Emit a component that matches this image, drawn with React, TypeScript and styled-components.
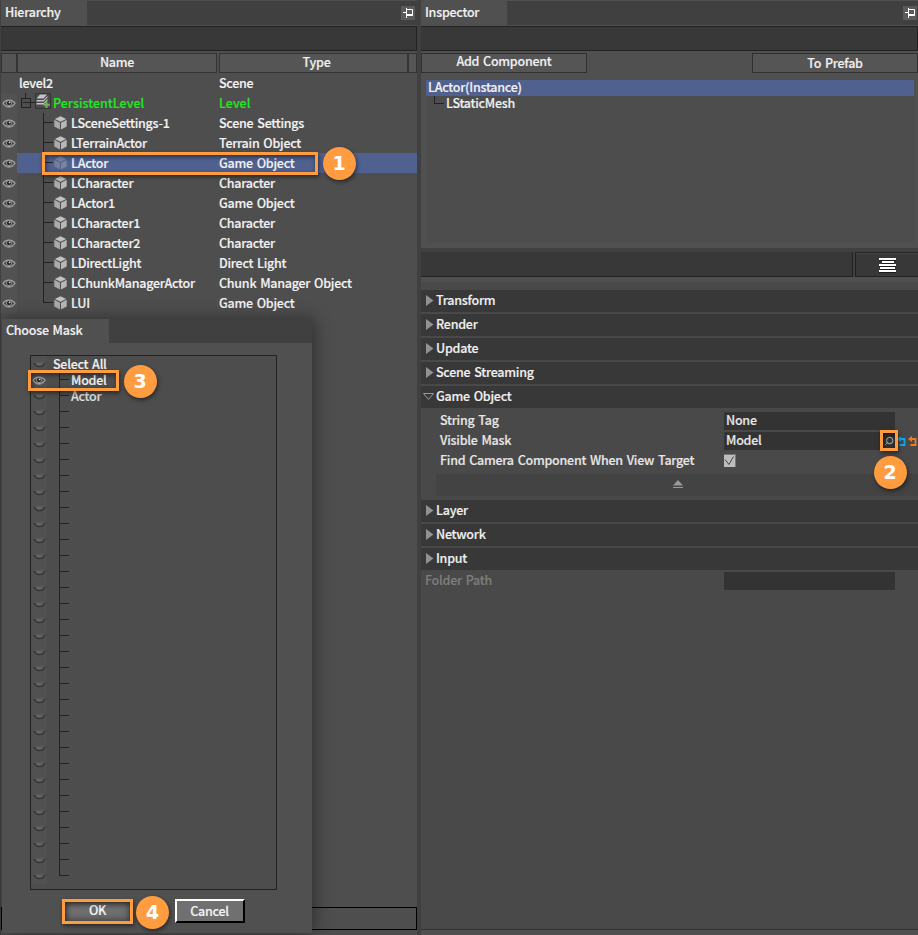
import React from 'react';
import styled, { createGlobalStyle, css } from 'styled-components';

const GlobalStyle = createGlobalStyle`
  * { box-sizing: border-box; }
  html, body { margin: 0; padding: 0; background: #4f4f4f; }
  body {
    font-family: "Noto Sans CJK SC", "Noto Sans", sans-serif;
    font-size: 12.5px;
    font-weight: 500;
    letter-spacing: -0.25px;
    word-spacing: 1.3px;
    -webkit-text-stroke: 0.15px currentColor;
    color: #f0f0f0;
    overflow: hidden;
  }
  button { letter-spacing: inherit; word-spacing: inherit; }
`;

const ORANGE = '#ff9c40';
const LINE = '#222222';

const Screen = styled.main`
  position: relative;
  display: flex;
  width: 918px;
  height: 935px;
  background: #4f4f4f;
  overflow: hidden;
  white-space: nowrap;
`;

const HierarchyPanel = styled.section`
  display: flex;
  flex-direction: column;
  width: 417px;
  padding-top: 1px;
  border-left: 1px solid #404040;
  background: #4e4e4e;
`;

const Splitter = styled.div`
  width: 4px;
  background: #404040;
`;

const InspectorPanel = styled.section`
  display: flex;
  flex-direction: column;
  width: 497px;
  padding-top: 1px;
  background: #505050;
`;

const TabBar = styled.header`
  display: flex;
  justify-content: space-between;
  flex: none;
  height: 24px;
  background: #404040;
`;

const Tab = styled.div<{ $width: number }>`
  width: ${(p) => p.$width}px;
  padding-left: 4px;
  line-height: 22px;
  background: #505050;
`;

const PinButton = styled.button<{ $gap: number }>`
  display: block;
  width: 14px;
  height: 14px;
  margin: 5px ${(p) => p.$gap}px 0 0;
  padding: 0;
  border: 0;
  background: #5a5a5a;
  svg { display: block; }
`;

const Toolbar = styled.div`
  flex: none;
  height: 25px;
  margin-top: 1px;
  border: solid ${LINE};
  border-width: 1px 1px 1px 0;
  background: #383838;
`;

const ColumnHeader = styled.div`
  display: flex;
  flex: none;
  height: 20px;
  margin-top: 2px;
`;

const HeaderCell = styled.div<{ $width: number; $after?: number; $inset?: number }>`
  width: ${(p) => p.$width}px;
  margin-right: ${(p) => p.$after ?? 0}px;
  padding-left: ${(p) => p.$inset ?? 0}px;
  border: 1px solid #343434;
  background: #555;
  text-align: center;
  line-height: ${(p) => (p.$inset ? 15 : 16)}px;
`;

const TreeRow = styled.div<{ $selected?: boolean; $accent?: boolean }>`
  display: flex;
  flex: none;
  height: 20px;
  line-height: 20px;
  letter-spacing: ${(p) => (p.$accent ? '0' : 'inherit')};
  color: ${(p) => (p.$accent ? '#22e622' : '#f2f2f2')};
  background: ${(p) => (p.$selected ? '#506190' : 'transparent')};
`;

const EyeCell = styled.div<{ $blank?: boolean }>`
  width: 16px;
  padding-top: 5px;
  background: ${(p) => (p.$blank ? '#4e4e4e' : '#525252')};
  svg { display: block; margin-left: 1px; }
`;

const NameCell = styled.div<{ $indent: number }>`
  display: flex;
  width: 202px;
  padding-left: ${(p) => p.$indent}px;
`;

const Branch = styled.span<{ $last?: boolean; $row: number; $tick: number }>`
  position: relative;
  flex: none;
  width: 10px;
  height: ${(p) => p.$row}px;
  &::before, &::after { content: ''; position: absolute; left: 0; background: ${LINE}; }
  &::before { top: 0; width: 1px; height: ${(p) => (p.$last ? `${p.$tick}px` : '100%')}; }
  &::after { top: ${(p) => p.$tick}px; width: 10px; height: 1px; }
`;

const CubeBox = styled.span<{ $dim?: boolean }>`
  width: 18px;
  padding: 3px 0 0 1px;
  opacity: ${(p) => (p.$dim ? 0.4 : 1)};
  svg { display: block; }
`;

const Fill = styled.div`
  flex: 1;
`;

const CommandLine = styled.div`
  flex: none;
  height: 23px;
  margin-bottom: 5px;
  border: 1px solid #000;
`;

const ActionBar = styled.div`
  display: flex;
  justify-content: space-between;
  flex: none;
  height: 20px;
  margin-top: 2px;
`;

const ActionButton = styled.button<{ $shift?: number }>`
  display: flex;
  justify-content: center;
  align-items: flex-start;
  width: 166px;
  height: 20px;
  padding: 0;
  border: 1px solid #303030;
  background: #555;
  color: inherit;
  font: inherit;
  line-height: ${(p) => 14 + (p.$shift ?? 0)}px;
`;

const ComponentList = styled.div`
  flex: none;
  height: 163px;
  margin: 7px 4px 0 5px;
  background: #4d4d4d;
`;

const ComponentRow = styled.div<{ $selected?: boolean }>`
  display: flex;
  height: 16px;
  padding-left: ${(p) => (p.$selected ? 2 : 8)}px;
  line-height: 14px;
  background: ${(p) => (p.$selected ? '#506190' : 'transparent')};
`;

const Elbow = styled.span`
  width: 10px;
  height: 8px;
  margin-right: 2px;
  border: solid ${LINE};
  border-width: 0 0 1px 1px;
`;

const FilterBar = styled.div`
  display: flex;
  flex: none;
  gap: 2px;
  height: 29px;
  margin-top: 5px;
  padding-top: 4px;
  background: #404040;
`;

const FilterField = styled.div`
  width: 432px;
  border: solid ${LINE};
  border-width: 0 1px 1px 0;
  background: #383838;
`;

const MenuButton = styled.button`
  display: flex;
  align-items: flex-start;
  flex: 1;
  padding: 4px 0 0 22px;
  border: 1px solid ${LINE};
  border-right: 0;
  background: #383838;
  box-shadow: inset 0 1px #444;
`;

const Properties = styled.div`
  flex: 1;
  margin: 5px 0 5px;
  padding-top: 8px;
  background: #494949;
  border-bottom: 1px solid #333;
`;

const SectionHead = styled.div`
  display: flex;
  height: 22px;
  margin-bottom: 2px;
  line-height: 20px;
  background: #383838;
  svg { display: block; flex: none; }
`;

const SectionBody = styled.div`
  display: flex;
  flex-direction: column;
  height: 90px;
  padding-top: 2px;
`;

const PropertyRow = styled.div<{ $indent?: number; $muted?: boolean }>`
  display: flex;
  height: 20px;
  padding-left: ${(p) => p.$indent ?? 19}px;
  line-height: 16px;
  color: ${(p) => (p.$muted ? '#7d7d7d' : '#e6e6e6')};
`;

const PropertyLabel = styled.div<{ $width?: number }>`
  flex: none;
  width: ${(p) => p.$width ?? 284}px;
`;

const ValueField = styled.div`
  display: flex;
  justify-content: space-between;
  flex: none;
  width: 171px;
  height: 18px;
  padding-left: 2px;
  background: #333;
`;

const Checkbox = styled.span`
  width: 12px;
  height: 13px;
  margin-top: 2px;
  border: solid #777;
  border-width: 1px 1px 0 0;
  background: #bdbdbd;
  svg { display: block; }
`;

const CollapseStrip = styled.div`
  height: 22px;
  margin: 2px 0 0 15px;
  padding: 6px 0 0 237px;
  background: #434343;
  svg { display: block; }
`;

const Dialog = styled.section`
  position: absolute;
  left: 2px;
  top: 319px;
  width: 310px;
  height: 614px;
  background: #505050;
  box-shadow: 2px 0 16px rgba(0, 0, 0, 0.42);
`;

const MaskList = styled.div`
  width: 247px;
  height: 535px;
  margin: 12px 0 0 28px;
  border: 1px solid ${LINE};
  background: #4d4d4d;
`;

const MaskRow = styled.div`
  display: flex;
  height: 16px;
  line-height: 16px;
`;

const MaskEye = styled.div<{ $open?: boolean }>`
  width: 16px;
  padding: ${(p) => (p.$open ? '3px 0 0 1px' : '0 0 0 2px')};
  margin-right: 12px;
  background: #515151;
  svg { display: block; }
`;

const MaskLabel = styled.span<{ $root?: boolean; $dim?: boolean }>`
  margin-left: ${(p) => (p.$root ? -6 : 2)}px;
  color: ${(p) => (p.$dim ? '#dedede' : '#f0f0f0')};
`;

const DialogActions = styled.footer`
  display: flex;
  gap: 43px;
  padding: 9px 0 0 60px;
`;

const DialogButton = styled.button<{ $marked?: boolean }>`
  display: flex;
  justify-content: center;
  align-items: flex-start;
  width: 70px;
  height: 24px;
  padding: 0 1px 0 0;
  border: 2px solid #fff;
  border-color: #fff #000 #000 #fff;
  background: #707070;
  color: #f4f4f4;
  font: inherit;
  line-height: 20px;
  ${(p) =>
    p.$marked &&
    css`
      padding: 0 0 0 1px;
      border-color: transparent;
      box-shadow: inset 0 0 7px 2px rgba(45, 45, 45, 0.55);
      line-height: 18px;
    `}
`;

const Marker = styled.div<{ $x: number; $y: number; $w: number; $h: number }>`
  position: absolute;
  left: ${(p) => p.$x}px;
  top: ${(p) => p.$y}px;
  width: ${(p) => p.$w}px;
  height: ${(p) => p.$h}px;
  border: 3px solid ${ORANGE};
  box-shadow: 1px 2px 4px rgba(0, 0, 0, 0.5), inset 1px 2px 5px rgba(0, 0, 0, 0.5);
`;

const StepBadge = styled.div<{ $x: number; $y: number }>`
  position: absolute;
  left: ${(p) => p.$x - 16.5}px;
  top: ${(p) => p.$y - 16.5}px;
  width: 33px;
  height: 33px;
  border-radius: 50%;
  background: ${ORANGE};
  box-shadow: 1px 2px 4px rgba(0, 0, 0, 0.5);
  color: #fff;
  font: 700 19px/32px "DejaVu Sans", sans-serif;
  letter-spacing: 0;
  -webkit-text-stroke: 0;
  text-align: center;
`;

const PinIcon = () => (
  <svg width="14" height="14" viewBox="0 0 14 14" fill="none" stroke="#fff">
    <path d="M5.5 2v10M2 6.5h3.5" />
    <path d="M5.5 3.5h6v6h-6" />
    <path d="M5.5 9h6" strokeWidth="2" />
  </svg>
);

const EyeIcon = () => (
  <svg width="14" height="11" viewBox="0 0 14 11">
    <path d="M1 5.3C3.5 1 10.5 1 13 5.3C10.5 9.7 3.5 9.7 1 5.3Z" fill="#4a4a4a" stroke="#aaa" strokeWidth="1.1" />
    <path d="M2 7.2C4.5 10 9.5 10 12 7.2" fill="none" stroke="#8a8a8a" />
    <circle cx="7" cy="5" r="2.6" fill="#252525" stroke="#999" strokeWidth=".9" />
    <circle cx="7.6" cy="4.3" r=".9" fill="#ddd" />
  </svg>
);

const ClosedEyeIcon = () => (
  <svg width="13" height="12" viewBox="0 0 13 12">
    <path d="M2.5 6.5h8Q9 9.5 6.5 9.5T2.5 6.5Z" fill="#626262" />
    <path d="M.7 7Q3 10.800 6.500 10.800T12.300 7" fill="none" stroke="#303030" strokeWidth="1.1" />
  </svg>
);

const CubeIcon = () => (
  <svg width="13" height="14" viewBox="0 0 13 14">
    <path d="M6.5 .3l5.7 2.6-5.7 2.9L.8 2.900z" fill="#c2c2c2" />
    <path d="M.3 3.800L6 6.700v6.900L.3 10.500z" fill="#aaa" />
    <path d="M12.700 3.800L7 6.700v6.900l5.700-3.100z" fill="#b8b8b8" />
  </svg>
);

const LevelIcon = () => (
  <svg width="32" height="20" viewBox="0 0 32 20">
    <path d="M4.5 0v5M2 9.5h12" stroke={LINE} fill="none" />
    <rect x=".5" y="5.5" width="9" height="9" stroke={LINE} fill="none" />
    <rect x="14.5" y=".5" width="15" height="15" fill="#4a4a4a" stroke="#343434" />
    <path d="M19 1.500h7l-3.500 4h-7zM15.500 7h7l4-4v1.500l-4 4h-7zM15.500 10h7l4-4v1.500l-4 4h-7z" fill="#c4c4c4" />
    <path d="M25.500 8.500v6.500M22.300 11.700h6.500" stroke="#69b956" strokeWidth="2" />
  </svg>
);

const ArrowIcon = ({ open }: { open?: boolean }) => (
  <svg width="15" height="22" viewBox="0 0 15 22">
    {open ? (
      <path d="M2.5 7.5h10l-5 6z" fill="none" stroke="#999" />
    ) : (
      <path d="M5 5v11l7.500-5.500z" fill="#929292" />
    )}
  </svg>
);

const LinesIcon = () => (
  <svg width="18" height="16" viewBox="0 0 18 16">
    <path d="M1 2h17M4 5h12M1 8h17M2 11h15M1 14h17" stroke="#1b1b1b" strokeWidth="2" transform="translate(0 1)" />
    <path d="M1 2h17M4 5h12M1 8h17M2 11h15M1 14h17" stroke="#fff" strokeWidth="2" />
  </svg>
);

const SearchIcon = () => (
  <svg width="11" height="18" viewBox="0 0 11 18" fill="none" stroke="#bbb">
    <circle cx="5.7" cy="8.5" r="3.2" />
    <path d="M3.5 10.7L1.3 12.7" />
  </svg>
);

const ResetIcon = ({ color }: { color: string }) => (
  <svg width="11" height="18" viewBox="0 0 11 18">
    <path d="M4 7h4.500v6H3.500" fill="none" stroke={color} strokeWidth="1.8" />
    <path d="M1 7l4-3v6z" fill={color} />
  </svg>
);

const CheckIcon = () => (
  <svg width="11" height="12" viewBox="0 0 11 12">
    <path d="M1 4.5l4 5 4.5-8" fill="none" stroke="#444" />
  </svg>
);

const CollapseIcon = () => (
  <svg width="10" height="9" viewBox="0 0 10 9">
    <path d="M5 0l5 5.5H0zM0 7h10v1H0z" fill="#999" />
  </svg>
);

const ResetGroup = styled.div`
  display: flex;
  flex: none;
  margin-left: 1px;
  svg { display: block; }
`;

const actors: [string, string][] = [
  ['LSceneSettings-1', 'Scene Settings'],
  ['LTerrainActor', 'Terrain Object'],
  ['LActor', 'Game Object'],
  ['LCharacter', 'Character'],
  ['LActor1', 'Game Object'],
  ['LCharacter1', 'Character'],
  ['LCharacter2', 'Character'],
  ['LDirectLight', 'Direct Light'],
  ['LChunkManagerActor', 'Chunk Manager Object'],
  ['LUI', 'Game Object'],
];

const masks = ['Model', 'Actor', ...Array<string>(30).fill('')];

const Section = ({ title, open }: { title: string; open?: boolean }) => (
  <SectionHead>
    <ArrowIcon open={open} />
    {title}
  </SectionHead>
);

const Hierarchy = () => (
  <HierarchyPanel>
    <TabBar>
      <Tab $width={86}>Hierarchy</Tab>
      <PinButton $gap={2}><PinIcon /></PinButton>
    </TabBar>
    <Toolbar />
    <ColumnHeader>
      <HeaderCell $width={16} />
      <HeaderCell $width={200} $after={2}>Name</HeaderCell>
      <HeaderCell $width={189} $inset={6}>Type</HeaderCell>
      <HeaderCell $width={9} />
    </ColumnHeader>
    <TreeRow>
      <EyeCell $blank />
      <NameCell $indent={2}>level2</NameCell>
      Scene
    </TreeRow>
    <TreeRow $accent>
      <EyeCell><EyeIcon /></EyeCell>
      <NameCell $indent={4}><LevelIcon />PersistentLevel</NameCell>
      Level
    </TreeRow>
    {actors.map(([name, type], i) => (
      <TreeRow key={name} $selected={i === 2}>
        <EyeCell><EyeIcon /></EyeCell>
        <NameCell $indent={26}>
          <Branch $row={20} $tick={9} $last={i === actors.length - 1} />
          <CubeBox $dim={i === 2}><CubeIcon /></CubeBox>
          {name}
        </NameCell>
        {type}
      </TreeRow>
    ))}
    <Fill />
    <CommandLine />
  </HierarchyPanel>
);

const Inspector = () => (
  <InspectorPanel>
    <TabBar>
      <Tab $width={86}>Inspector</Tab>
      <PinButton $gap={1}><PinIcon /></PinButton>
    </TabBar>
    <Toolbar />
    <ActionBar>
      <ActionButton>Add Component</ActionButton>
      <ActionButton $shift={4}>To Prefab</ActionButton>
    </ActionBar>
    <ComponentList>
      <ComponentRow $selected>LActor(Instance)</ComponentRow>
      <ComponentRow><Elbow />LStaticMesh</ComponentRow>
    </ComponentList>
    <FilterBar>
      <FilterField />
      <MenuButton><LinesIcon /></MenuButton>
    </FilterBar>
    <Properties>
      <Section title="Transform" />
      <Section title="Render" />
      <Section title="Update" />
      <Section title="Scene Streaming" />
      <Section title="Game Object" open />
      <SectionBody>
        <PropertyRow>
          <PropertyLabel>String Tag</PropertyLabel>
          <ValueField>None</ValueField>
        </PropertyRow>
        <PropertyRow>
          <PropertyLabel>Visible Mask</PropertyLabel>
          <ValueField>Model<SearchIcon /></ValueField>
          <ResetGroup>
            <ResetIcon color="#18a5e8" />
            <ResetIcon color="#f57a18" />
          </ResetGroup>
        </PropertyRow>
        <PropertyRow>
          <PropertyLabel>Find Camera Component When View Target</PropertyLabel>
          <Checkbox><CheckIcon /></Checkbox>
        </PropertyRow>
        <CollapseStrip><CollapseIcon /></CollapseStrip>
      </SectionBody>
      <Section title="Layer" />
      <Section title="Network" />
      <Section title="Input" />
      <PropertyRow $indent={4} $muted>
        <PropertyLabel $width={299}>Folder Path</PropertyLabel>
        <ValueField />
      </PropertyRow>
    </Properties>
  </InspectorPanel>
);

const ChooseMask = () => (
  <Dialog>
    <TabBar><Tab $width={107}>Choose Mask</Tab></TabBar>
    <MaskList>
      <MaskRow>
        <MaskEye><ClosedEyeIcon /></MaskEye>
        <MaskLabel $root>Select All</MaskLabel>
      </MaskRow>
      {masks.map((name, i) => (
        <MaskRow key={i}>
          <MaskEye $open={i === 0}>{i === 0 ? <EyeIcon /> : <ClosedEyeIcon />}</MaskEye>
          <Branch $row={16} $tick={7} $last={i === masks.length - 1} />
          <MaskLabel $dim={i > 0}>{name}</MaskLabel>
        </MaskRow>
      ))}
    </MaskList>
    <DialogActions>
      <DialogButton $marked>OK</DialogButton>
      <DialogButton>Cancel</DialogButton>
    </DialogActions>
  </Dialog>
);

export default function App() {
  return (
    <>
      <GlobalStyle />
      <Screen>
        <Hierarchy />
        <Splitter />
        <Inspector />
        <ChooseMask />
        <Marker $x={42} $y={152} $w={276} $h={23} />
        <StepBadge $x={339} $y={163}>1</StepBadge>
        <Marker $x={880} $y={430} $w={18} $h={21} />
        <StepBadge $x={890} $y={472}>2</StepBadge>
        <Marker $x={28} $y={370} $w={91} $h={21} />
        <StepBadge $x={140} $y={381}>3</StepBadge>
        <Marker $x={62} $y={899} $w={71} $h={25} />
        <StepBadge $x={152.5} $y={912}>4</StepBadge>
      </Screen>
    </>
  );
}
